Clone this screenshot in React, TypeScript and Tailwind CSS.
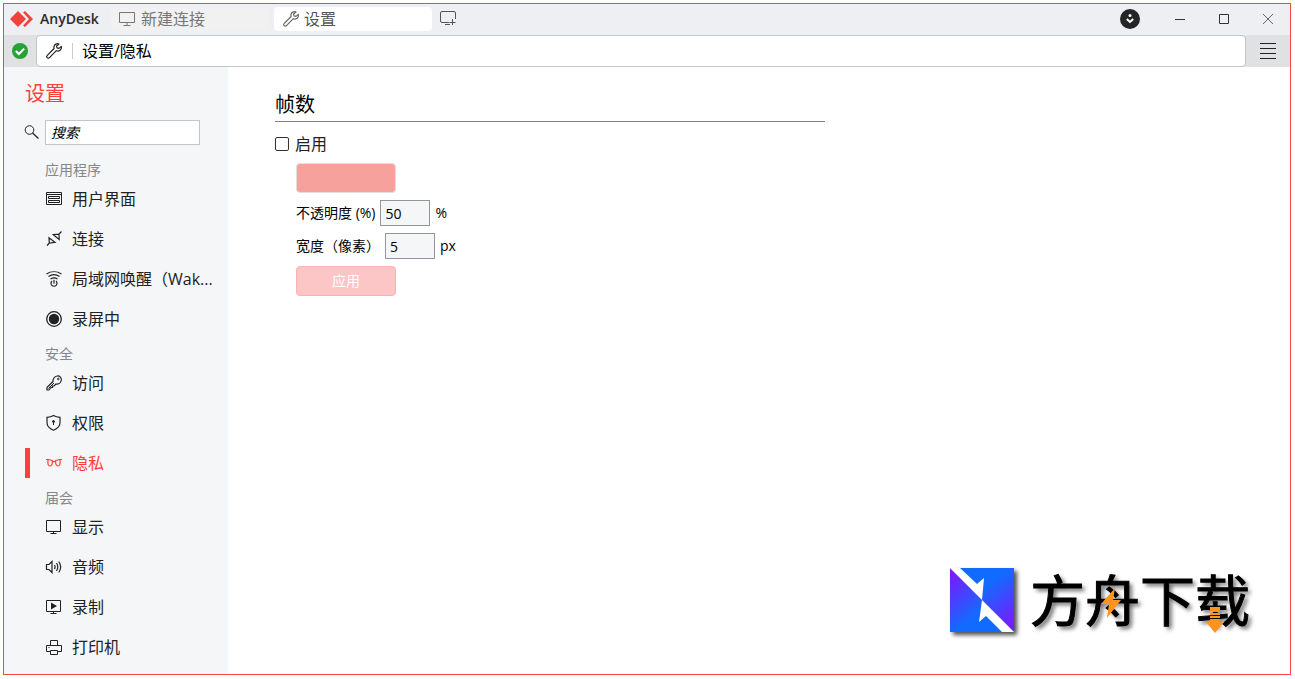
import React, { useState } from 'react';

type IconName =
    | 'ui' | 'plug' | 'wake' | 'record' | 'key' | 'shield' | 'glasses'
    | 'display' | 'audio' | 'recording' | 'printer';

const icons: Record<IconName, React.ReactNode> = {
    ui: (
        <>
            <path d="M1.5 2.5h15v12h-15zM1.5 4.5h15" />
            <path d="M3.5 6.5h11v2h-11zM3.5 10.5h11v2h-11z" />
        </>
    ),
    plug: (
        <path d="M2 15.5l3-3M4 7.7l.3 5.3 5.7-.7zM8.3 4.7l5.7-.5.2 5.3zM14 4l2.5-2.5" strokeWidth="1.2" />
    ),
    wake: (
        <>
            <path d="M1.5 4c4.500-3 10.500-3 15 0M3.500 6.500c3.500-2.300 7.500-2.300 11 0M5.500 9c2.300-1.600 4.700-1.600 7 0" strokeWidth="1.2" />
            <path d="M7 11a3 3 0 1 0 4 0M9 9.800v4" strokeWidth="1.2" />
        </>
    ),
    record: (
        <>
            <circle cx="9" cy="9" r="7.3" strokeWidth="1.3" />
            <circle cx="9" cy="9" r="5.2" fill="currentColor" stroke="none" />
        </>
    ),
    key: (
        <>
            <path d="M8 7.5c-.5-2.5 1.5-5 4.2-5.5 2.6-.3 4.6 1.8 4.1 4.4-.5 2.5-2.8 4-5.3 3.6L9 12H7.5v1.5H6L4 16H2v-2.5z" strokeWidth="1.2" />
            <path d="M9 9l-5.5 5.5" />
            <circle cx="13.3" cy="5" r="0.8" />
        </>
    ),
    shield: (
        <>
            <path d="M8.5 1.5c2 1.3 4 1.7 6.5 1.8v5.2c0 3.800-2.500 6.200-6.500 7.700-4-1.500-6.500-3.900-6.500-7.700V3.300c2.500-.1 4.500-.5 6.500-1.800z" strokeWidth="1.2" />
            <circle cx="8.5" cy="7.5" r="1" fill="currentColor" />
            <path d="M8.5 8v3" />
        </>
    ),
    glasses: (
        <>
            <path d="M1 5.5h2.5M17 5.5h-2.5M7.5 8c1-.8 2-.8 3 0" strokeWidth="1.2" />
            <path d="M3 5.5l4.3 1c.4 3.5-.6 5.5-2.3 5.500s-2.500-1.500-2-6.500zM15 5.500l-4.300 1c-.4 3.500.6 5.500 2.300 5.500s2.500-1.500 2-6.500z" strokeWidth="1.2" />
        </>
    ),
    display: <path d="M1.5 2.5h14v11h-14zM8.5 13.5v2M5.5 15.5h6" />,
    audio: (
        <path d="M1.5 6.5v5H4l3 3v-11l-3 3zM9.5 7c.7 1.2.7 2.8 0 4M11.5 5c1.6 2.5 1.6 5.5 0 8M13.7 3.5c2.5 3.5 2.5 7.5 0 11" strokeWidth="1.2" />
    ),
    recording: (
        <>
            <path d="M1.5 2.5h14v11h-14zM8.5 13.5v2M5.5 15.5h6" />
            <path d="M6 4.5v7L12 8z" fill="currentColor" stroke="none" />
        </>
    ),
    printer: (
        <>
            <path d="M5.5 7.5v-5h7v5M5.5 13.5h-4v-6h15v6h-4" />
            <path d="M5.5 12.5h7v4h-7zM3.5 9.5h1" />
        </>
    ),
};

const Icon = ({ name }: { name: IconName }) => (
    <svg viewBox="0 0 18 18" className="h-[18px] w-[18px] shrink-0" fill="none" stroke="currentColor" aria-hidden="true">
        {icons[name]}
    </svg>
);

const Wrench = ({ className }: { className: string }) => (
    <svg viewBox="0 0 18 18" className={`h-[18px] w-[18px] shrink-0 ${className}`} fill="none" stroke="currentColor" strokeWidth="1.2" strokeLinejoin="round" aria-hidden="true">
        <path d="M14 2c-2-.8-4.5.3-5 2.3-.2.8-.1 1.5.1 2.2L2.3 13.3c-.8.8-.8 1.8-.2 2.4.7.7 1.7.6 2.4-.1l6.8-6.9c2 .7 4.1-.2 4.9-2 .3-.8.3-1.6.1-2.3l-2.3 2-2-.5-.4-1.900z" />
    </svg>
);

const sections: { title: string; items: { icon: IconName; label: string }[] }[] = [
    {
        title: '应用程序',
        items: [
            { icon: 'ui', label: '用户界面' },
            { icon: 'plug', label: '连接' },
            { icon: 'wake', label: '局域网唤醒（Wak...' },
            { icon: 'record', label: '录屏中' },
        ],
    },
    {
        title: '安全',
        items: [
            { icon: 'key', label: '访问' },
            { icon: 'shield', label: '权限' },
            { icon: 'glasses', label: '隐私' },
        ],
    },
    {
        title: '届会',
        items: [
            { icon: 'display', label: '显示' },
            { icon: 'audio', label: '音频' },
            { icon: 'recording', label: '录制' },
            { icon: 'printer', label: '打印机' },
        ],
    },
];

const TitleBar = () => (
    <header className="flex h-[31px] items-center bg-[#eeeff2] pb-px text-[#555]">
        <div className="flex w-[107px] items-center gap-[7px] pl-1.5">
            <svg viewBox="0 0 23 16" className="h-4 w-[23px]" aria-hidden="true">
                <path d="M8 0l8 8-8 8-8-8z" fill="#ef443b" />
                <path d="M13 1.5L15 0l8 8-8 8-2-1.5L19 8z" fill="#ef443b" />
            </svg>
            <span className="text-sm font-semibold text-[#2b2b2b]">AnyDesk</span>
        </div>
        <button className="flex h-6 w-[158px] items-center gap-1.5 rounded-sm bg-[#f1f1f2] pl-2 text-base leading-none text-[#777]">
            <svg viewBox="0 0 16 16" className="h-4 w-4" fill="none" stroke="currentColor" aria-hidden="true">
                <path d="M.5 1.5h15v10H.5zM8 11.5V14M4.5 14.5h7" />
            </svg>
            新建连接
        </button>
        <button className="ml-[5px] flex h-6 w-[158px] items-center gap-1 rounded-sm bg-white pl-2 text-base leading-none">
            <Wrench className="text-[#666]" />
            设置
        </button>
        <button className="ml-2" aria-label="新标签页">
            <svg viewBox="0 0 17 16" className="h-4 w-[17px]" fill="none" stroke="currentColor" aria-hidden="true">
                <path d="M9 11.5H2Q.5 11.5.5 10V2Q.5.5 2 .5h12q1.5 0 1.5 1.5v6M5 13.5h5M12.5 8v6M9.5 11.5h6" />
            </svg>
        </button>
        <div className="ml-auto flex items-center text-[#333]">
            <button className="mr-[34px]" aria-label="更新">
                <svg viewBox="0 0 20 20" className="h-5 w-5" aria-hidden="true">
                    <circle cx="10" cy="10" r="10" fill="#252525" />
                    <circle cx="10" cy="6.5" r="1.5" fill="#fff" />
                    <path d="M6.8 10l3.2 3 3.2-3" fill="none" stroke="#fff" strokeWidth="2" />
                </svg>
            </button>
            <button className="mr-8" aria-label="最小化">
                <svg viewBox="0 0 12 12" className="h-3 w-3" stroke="currentColor" aria-hidden="true"><path d="M1 6.5h10" /></svg>
            </button>
            <button className="mr-8" aria-label="最大化">
                <svg viewBox="0 0 12 12" className="h-3 w-3" fill="none" stroke="currentColor" aria-hidden="true"><path d="M1.5 1.5h9v9h-9z" /></svg>
            </button>
            <button className="mr-4 text-[#666]" aria-label="关闭">
                <svg viewBox="0 0 12 12" className="h-3 w-3" stroke="currentColor" aria-hidden="true"><path d="M1 1l10 10M11 1L1 11" /></svg>
            </button>
        </div>
    </header>
);

const AddressBar = () => (
    <div className="flex h-8 bg-[#e0e1e3]">
        <div className="flex w-8 items-center justify-center">
            <svg viewBox="0 0 16 16" className="h-4 w-4" aria-hidden="true">
                <circle cx="8" cy="8" r="8" fill="#26a336" />
                <path d="M3.8 8l3 3 5.4-5.4" fill="none" stroke="#fff" strokeWidth="2" />
            </svg>
        </div>
        <div className="flex flex-1 items-center rounded-sm border border-[#c3c4c6] bg-white pl-2">
            <Wrench className="text-[#222]" />
            <span className="ml-[9px] h-4 w-px bg-[#ccc]" />
            <input
                type="text"
                aria-label="地址"
                defaultValue="设置/隐私"
                className="ml-[9px] h-6 flex-1 bg-transparent text-base text-black outline-none"
            />
        </div>
        <button className="flex w-11 items-center justify-center text-[#222]" aria-label="菜单">
            <svg viewBox="0 0 16 18" className="h-[18px] w-4" stroke="currentColor" aria-hidden="true">
                <path d="M0 1.5h16M0 6.5h16M0 11.5h16M0 16.5h16" />
            </svg>
        </button>
    </div>
);

const Sidebar = ({ active, onSelect }: { active: string; onSelect: (label: string) => void }) => (
    <aside className="w-56 shrink-0 bg-[#f4f6f8] pb-1.5">
        <h1 className="pt-[13px] pl-[21px] text-xl leading-7 text-[#ff4038]">设置</h1>
        <div className="mt-3 flex items-center gap-1.5 pl-5">
            <svg viewBox="0 0 15 15" className="h-[15px] w-[15px]" fill="none" stroke="#222" aria-hidden="true">
                <circle cx="5.5" cy="5" r="4.3" />
                <path d="M8.5 8l6 5.5" strokeWidth="1.3" />
            </svg>
            <input
                type="text"
                aria-label="搜索"
                placeholder="搜索"
                className="h-[25px] w-[155px] border border-[#c3c5c7] bg-white px-[5px] text-sm italic text-black outline-none placeholder:text-black"
            />
        </div>
        <nav className="mt-2.5">
            {sections.map((section) => (
                <div key={section.title}>
                    <h2 className="flex h-6 items-end pl-[41px] text-sm leading-[18px] text-[#858789]">{section.title}</h2>
                    {section.items.map(({ icon, label }) => (
                        <button
                            key={label}
                            onClick={() => onSelect(label)}
                            className={`flex h-10 w-full items-center pl-[21px] text-base whitespace-nowrap ${active === label ? 'text-[#ff4038]' : 'text-[#222]'}`}
                        >
                            <span className={`mr-[15px] h-[30px] w-[5px] ${active === label ? 'bg-[#ff4038]' : ''}`} />
                            <Icon name={icon} />
                            <span className="ml-[9px]">{label}</span>
                        </button>
                    ))}
                </div>
            ))}
        </nav>
    </aside>
);

const Brand = () => (
    <div className="absolute right-10 bottom-[42px] flex items-center gap-4">
        <svg viewBox="0 0 64 64" className="h-16 w-16 drop-shadow-[3px_3px_2px_rgba(0,0,0,0.7)]" aria-hidden="true">
            <defs>
                <linearGradient id="brandTop" x1="0.2" y1="0" x2="1" y2="1">
                    <stop offset="0.35" stopColor="#126bff" />
                    <stop offset="1" stopColor="#8710ff" />
                </linearGradient>
                <linearGradient id="brandBottom" x1="0" y1="0" x2="0.8" y2="1">
                    <stop offset="0" stopColor="#8710ff" />
                    <stop offset="0.65" stopColor="#126bff" />
                </linearGradient>
            </defs>
            <path d="M0 0h64v64z" fill="url(#brandTop)" />
            <path d="M0 0v64h64z" fill="url(#brandBottom)" />
            <path d="M0 0h10l17 16 7-6-2 22zM32 32l32 32H52L36 48l-7 6z" fill="#fff" />
        </svg>
        <div className="relative">
            <span className="block text-[55px] leading-[64px] text-black [-webkit-text-stroke:1px_black] [text-shadow:3px_3px_4px_rgba(0,0,0,0.6)]">方舟下载</span>
            <svg viewBox="0 0 20 30" className="absolute top-5 left-[71px] h-[30px] w-5" aria-hidden="true">
                <path d="M14 0L0 16h8L6 30l14-18h-8z" fill="#ff9420" />
            </svg>
            <svg viewBox="0 0 18 26" className="absolute top-[39px] left-[176px] h-[26px] w-[18px]" fill="#ff9420" aria-hidden="true">
                <path d="M4 0h10v5H4zM4 6h10v2H4zM4 9h10v2H4zM4 12h10v3h4L9 26 0 15h4z" />
            </svg>
        </div>
    </div>
);

const PrivacySettings = () => (
    <main className="relative flex-1 bg-white pt-[23px] pl-[47px] text-sm text-black">
        <div className="max-w-[550px]">
            <h2 className="border-b border-[#808080] pb-px text-xl leading-[30px]">帧数</h2>
            <label className="mt-2.5 flex h-6 items-center gap-1.5 text-base text-[#222]">
                <input type="checkbox" className="h-3.5 w-3.5 appearance-none rounded-xs border border-[#333] bg-white checked:bg-[#ff4038]" />
                启用
            </label>
            <div className="mt-[7px] flex flex-col items-start pl-[21px]">
                <button className="h-[30px] w-[100px] rounded-sm border border-[#e5dede] bg-[#f7a19d]" aria-label="颜色" />
                <div className="mt-[7px] flex h-[26px] items-center gap-[5px]">
                    <label htmlFor="opacity">不透明度 (%)</label>
                    <input id="opacity" type="text" defaultValue="50" className="h-[26px] w-[50px] border border-[#949699] bg-[#f4f6f8] px-1 outline-none" />
                    <span>%</span>
                </div>
                <div className="mt-[7px] flex h-[26px] items-center gap-[5px]">
                    <label htmlFor="width">宽度（像素）</label>
                    <input id="width" type="text" defaultValue="5" className="h-[26px] w-[50px] border border-[#949699] bg-[#f4f6f8] px-1 outline-none" />
                    <span>px</span>
                </div>
                <button className="mt-[7px] h-[30px] w-[100px] rounded-sm border border-[#f9b3b1] bg-[#fbc6c5] text-white">应用</button>
            </div>
        </div>
        <Brand />
    </main>
);

const App: React.FC = () => {
    const [active, setActive] = useState('隐私');

    return (
        <div className="flex min-h-screen bg-white pt-[3px] pr-1 pb-1 pl-[3px] font-['Open_Sans','Noto_Sans_CJK_SC',sans-serif]">
            <div className="flex flex-1 flex-col border border-[#f5483f]">
                <TitleBar />
                <AddressBar />
                <div className="flex flex-1">
                    <Sidebar active={active} onSelect={setActive} />
                    <PrivacySettings />
                </div>
            </div>
        </div>
    );
};

export default App;
